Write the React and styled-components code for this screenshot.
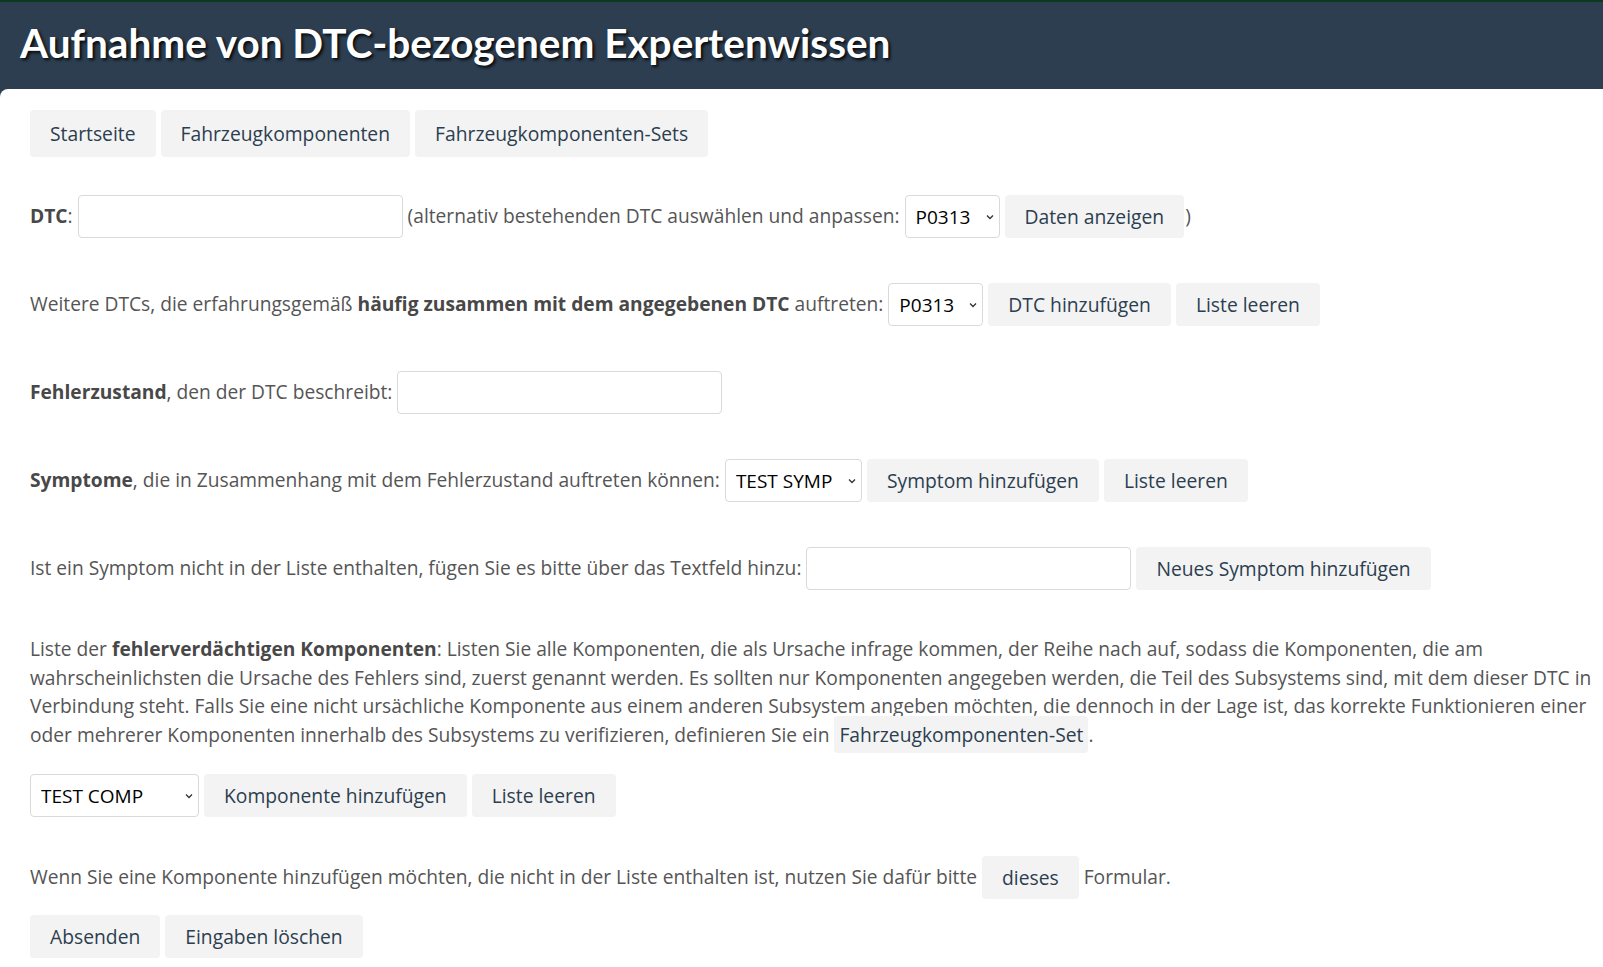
import React from "react";
import styled, { createGlobalStyle } from "styled-components";

const GlobalStyle = createGlobalStyle`
  html, body { margin: 0; padding: 0; }
  body {
    background: #2c3e50;
    font-family: "Open Sans", "Noto Sans", sans-serif;
  }
`;

const Header = styled.header`
  border-top: 2px solid #0c3a1f;
  background: #2c3e50;
  height: 89px;
  box-sizing: border-box;
  display: flex;
  align-items: center;
  padding: 0 0 6px 20px;
`;

const Title = styled.h1`
  margin: 0;
  font-family: "Lato", sans-serif;
  font-weight: 700;
  font-size: 40.5px;
  color: #ffffff;
  text-shadow: 2px 2px 3px rgba(0, 0, 0, 0.85);
`;

const Main = styled.main`
  background: #ffffff;
  border-top-left-radius: 8px;
  padding: 21px 10px 8px 30px;
  min-height: calc(100vh - 89px);
  box-sizing: border-box;
  color: #555;
  font-size: 19.2px;
`;

const Nav = styled.nav`
  display: flex;
  gap: 5px;
`;

const Button = styled.button`
  font-family: "Open Sans", "Noto Sans", sans-serif;
  font-size: 19.3px;
  color: #2c3e50;
  background: #f3f3f3;
  border: none;
  border-radius: 4px;
  height: ${(p) => (p.$tall ? "47px" : "43px")};
  padding: 0 20px;
  cursor: pointer;
  white-space: nowrap;
`;

const Row = styled.div`
  display: flex;
  align-items: center;
  gap: 5px;
  margin-top: ${(p) => p.$mt}px;
  line-height: 1.6;
  white-space: nowrap;
`;

const Text = styled.span`
  color: #555;
  margin-left: ${(p) => (p.$tight ? "-4px" : "0")};
`;

const Strong = styled.strong`
  font-weight: 700;
  color: #484848;
`;

const Input = styled.input`
  width: 325px;
  height: 43px;
  box-sizing: border-box;
  border: 1px solid #d9d9d9;
  border-radius: 4px;
  background: #fff;
  font-size: 19px;
  padding: 0 10px;
  font-family: "Open Sans", sans-serif;
`;

const SelectWrap = styled.span`
  position: relative;
  display: inline-flex;
`;

const Select = styled.select`
  appearance: none;
  -webkit-appearance: none;
  width: ${(p) => p.$w}px;
  height: 43px;
  box-sizing: border-box;
  border: 1px solid #d9d9d9;
  border-radius: 4px;
  background: #fff;
  color: #000;
  font-family: "Open Sans", "Noto Sans", sans-serif;
  font-size: 19px;
  padding: 0 24px 0 10px;
  outline: none;
`;

const Chevron = styled.svg`
  position: absolute;
  right: 6px;
  top: 50%;
  margin-top: -3px;
  width: 8px;
  height: 6px;
  pointer-events: none;
`;

const Para = styled.p`
  margin: ${(p) => p.$mt}px 0 0 0;
  line-height: 28.5px;
  color: #555;
`;

const InlineLink = styled.a`
  font-family: "Open Sans", "Noto Sans", sans-serif;
  font-size: 19.3px;
  color: #2c3e50;
  background: #f3f3f3;
  border-radius: 4px;
  padding: 5px 5px;
  text-decoration: none;
`;

function Dropdown({ w, value }) {
  return (
    <SelectWrap>
      <Select $w={w} defaultValue={value}>
        <option>{value}</option>
      </Select>
      <Chevron viewBox="0 0 8 6">
        <path d="M1 1.5 L4 4.5 L7 1.5" fill="none" stroke="#333" strokeWidth="1.3" />
      </Chevron>
    </SelectWrap>
  );
}

export default function App() {
  return (
    <>
      <GlobalStyle />
      <Header>
        <Title>Aufnahme von DTC-bezogenem Expertenwissen</Title>
      </Header>
      <Main>
        <Nav>
          <Button $tall>Startseite</Button>
          <Button $tall>Fahrzeugkomponenten</Button>
          <Button $tall>Fahrzeugkomponenten-Sets</Button>
        </Nav>

        <Row $mt={38}>
          <Text>
            <Strong>DTC</Strong>:
          </Text>
          <Input type="text" />
          <Text>(alternativ bestehenden DTC auswählen und anpassen:</Text>
          <Dropdown w={95} value="P0313" />
          <Button>Daten anzeigen</Button>
          <Text $tight>)</Text>
        </Row>

        <Row $mt={45}>
          <Text>
            Weitere DTCs, die erfahrungsgemäß{" "}
            <Strong>häufig zusammen mit dem angegebenen DTC</Strong> auftreten:
          </Text>
          <Dropdown w={95} value="P0313" />
          <Button>DTC hinzufügen</Button>
          <Button>Liste leeren</Button>
        </Row>

        <Row $mt={45}>
          <Text>
            <Strong>Fehlerzustand</Strong>, den der DTC beschreibt:
          </Text>
          <Input type="text" />
        </Row>

        <Row $mt={45}>
          <Text>
            <Strong>Symptome</Strong>, die in Zusammenhang mit dem Fehlerzustand
            auftreten können:
          </Text>
          <Dropdown w={137} value="TEST SYMP" />
          <Button>Symptom hinzufügen</Button>
          <Button>Liste leeren</Button>
        </Row>

        <Row $mt={45}>
          <Text>
            Ist ein Symptom nicht in der Liste enthalten, fügen Sie es bitte über
            das Textfeld hinzu:
          </Text>
          <Input type="text" />
          <Button>Neues Symptom hinzufügen</Button>
        </Row>

        <Para $mt={45}>
          Liste der <Strong>fehlerverdächtigen Komponenten</Strong>: Listen Sie
          alle Komponenten, die als Ursache infrage kommen, der Reihe nach auf,
          sodass die Komponenten, die am wahrscheinlichsten die Ursache des
          Fehlers sind, zuerst genannt werden. Es sollten nur Komponenten
          angegeben werden, die Teil des Subsystems sind, mit dem dieser DTC in
          Verbindung steht. Falls Sie eine nicht ursächliche Komponente aus einem
          anderen Subsystem angeben möchten, die dennoch in der Lage ist, das
          korrekte Funktionieren einer oder mehrerer Komponenten innerhalb des
          Subsystems zu verifizieren, definieren Sie ein{" "}
          <InlineLink href="#">Fahrzeugkomponenten-Set</InlineLink>.
        </Para>

        <Row $mt={25}>
          <Dropdown w={169} value="TEST COMP" />
          <Button>Komponente hinzufügen</Button>
          <Button>Liste leeren</Button>
        </Row>

        <Row $mt={39}>
          <Text>
            Wenn Sie eine Komponente hinzufügen möchten, die nicht in der Liste
            enthalten ist, nutzen Sie dafür bitte
          </Text>
          <Button>dieses</Button>
          <Text>Formular.</Text>
        </Row>

        <Row $mt={16}>
          <Button>Absenden</Button>
          <Button>Eingaben löschen</Button>
        </Row>
      </Main>
    </>
  );
}
